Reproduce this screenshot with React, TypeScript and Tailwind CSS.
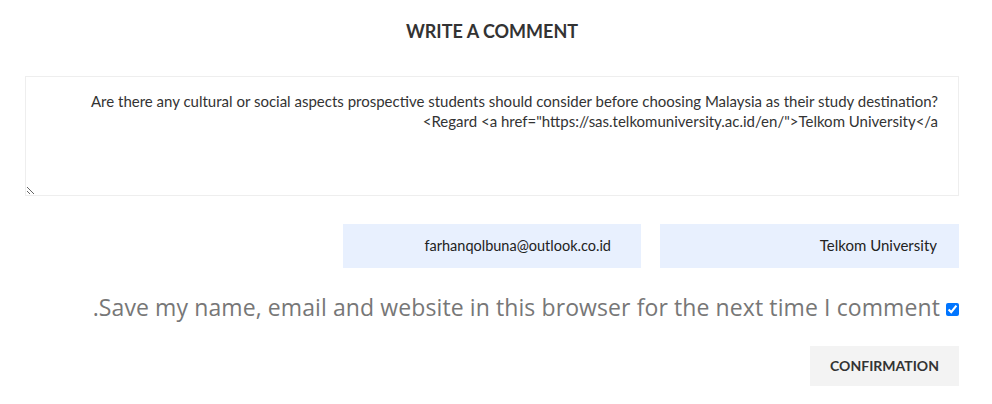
export default function App() {
  return (
    <div className="w-[992px] h-[404px] bg-white" style={{ fontFamily: "Lato, 'Noto Sans', sans-serif" }}>
      <div className="pl-[25px] w-[959px]">
        <h3 className="pt-[20px] text-center text-[18px] leading-[22px] font-bold text-[#333]">WRITE A COMMENT</h3>
        <form dir="rtl" className="mt-[34px]">
          <textarea
            className="block w-[934px] h-[120px] border border-[#eee] pt-[14px] pr-[20px] pl-[20px] text-right [unicode-bidi:plaintext] text-[15px] leading-[20px] text-[#333] resize-y outline-none"
            defaultValue={'Are there any cultural or social aspects prospective students should consider before choosing Malaysia as their study destination?\n<Regard <a href="https://sas.telkomuniversity.ac.id/en/">Telkom University</a'}
          />
          <div className="mt-[28px] flex gap-[19px]">
            <input
              className="w-[299px] h-[44px] bg-[#e8f0fe] pr-[22px] pb-[2px] text-[15px] text-[#222] outline-none"
              defaultValue="Telkom University"
            />
            <input
              className="w-[298px] h-[44px] bg-[#e8f0fe] pr-[30px] pb-[2px] text-[14.5px] text-[#222] outline-none"
              defaultValue="farhanqolbuna@outlook.co.id"
            />
          </div>
          <label className="mt-[24px] flex items-center gap-[6px] text-[23px] leading-[30px] tracking-[0.1px] text-[#777]" style={{ fontFamily: "'Open Sans', sans-serif" }}>
            <input type="checkbox" defaultChecked className="w-[13px] h-[13px] accent-[#0075ff] mt-[4px]" />
            <span dir="ltr">.Save my name, email and website in this browser for the next time I comment</span>
          </label>
          <div className="mt-[24px] flex">
            <button type="button" className="w-[149px] h-[40px] bg-[#f3f3f3] pb-[2px] text-[14px] font-bold text-[#333]">
              CONFIRMATION
            </button>
          </div>
        </form>
      </div>
    </div>
  );
}
